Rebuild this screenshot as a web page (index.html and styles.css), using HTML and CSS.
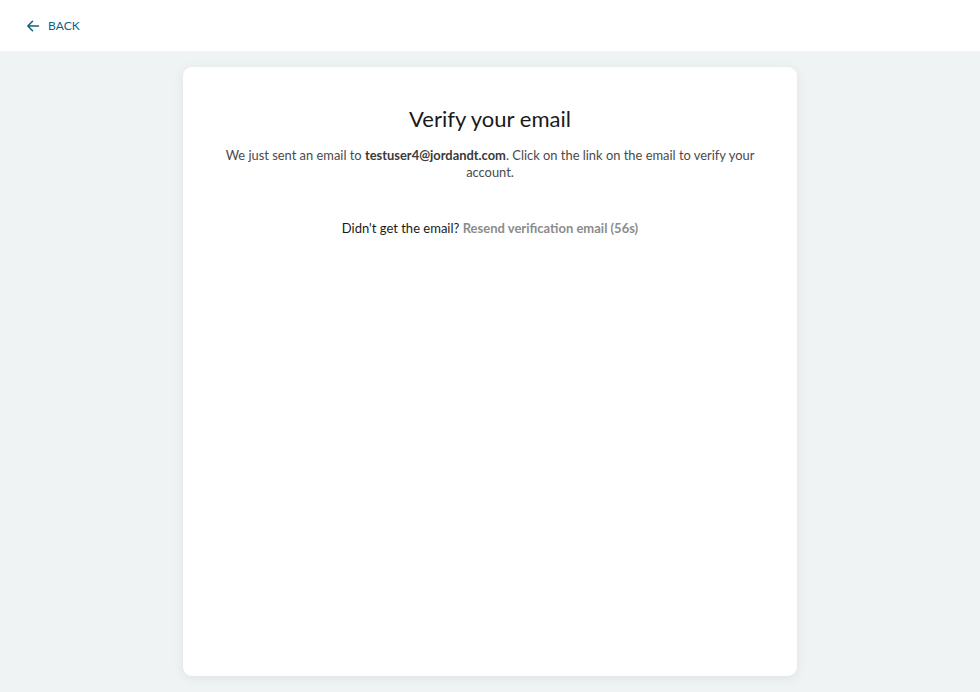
FILE: index.html
```html
<!DOCTYPE html>
<html>
<head>
<meta charset="utf-8">
<link rel="stylesheet" href="styles.css">
</head>
<body>
<header class="topbar">
  <a class="back" href="#">
    <svg class="back-icon" width="14" height="14" viewBox="0 0 14 14" fill="none" stroke="currentColor" stroke-width="1.5" stroke-linecap="round" stroke-linejoin="round"><path d="M12.5 7H1.8M6.5 2.2L1.8 7l4.7 4.8"/></svg>
    <span>BACK</span>
  </a>
</header>
<main class="page">
  <section class="card">
    <h1 class="title">Verify your email</h1>
    <p class="desc">We just sent an email to <strong>testuser4@jordandt.com</strong>. Click on the link on the email to verify your account.</p>
    <p class="resend">Didn't get the email? <span class="resend-link">Resend verification email (56s)</span></p>
  </section>
</main>
</body>
</html>
```
FILE: styles.css
```css
* { box-sizing: border-box; }
html, body { margin: 0; padding: 0; }
body {
  font-family: "Lato", "Noto Sans", sans-serif;
  background: #eff3f4;
  height: 692px;
  overflow: hidden;
}
.topbar {
  height: 51px;
  background: #ffffff;
  display: flex;
  align-items: center;
  padding-left: 26px;
}
.back {
  display: flex;
  align-items: center;
  gap: 8px;
  color: #15607f;
  text-decoration: none;
  font-size: 12px;
  letter-spacing: 0.1px;
}
.back-icon { display: block; }
.page {
  display: flex;
  justify-content: center;
  padding-top: 16px;
}
.card {
  width: 614px;
  height: 609px;
  background: #ffffff;
  border-radius: 9px;
  box-shadow: 0 2px 12px rgba(0, 0, 0, 0.07);
  padding: 37px 40px 0;
  text-align: center;
}
.title {
  margin: 0;
  font-weight: 400;
  font-size: 22px;
  line-height: 30px;
  color: #1a1a1a;
}
.desc {
  margin: 13px 0 0;
  font-size: 12.9px;
  line-height: 17px;
  color: #4a4a4a;
}
.desc strong { font-weight: 700; color: #3a3a3a; }
.resend {
  margin: 39px 0 0;
  font-size: 13px;
  line-height: 17px;
  color: #1a1a1a;
}
.resend-link { color: #8c8c8c; font-weight: 700; }
```
